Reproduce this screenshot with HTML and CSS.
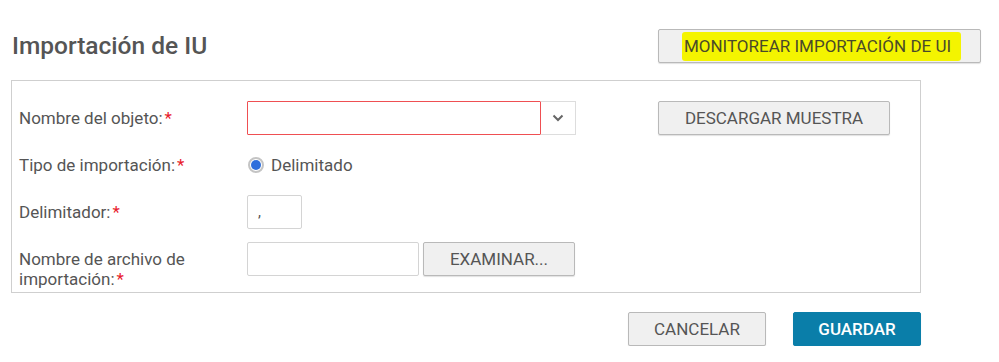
FILE: index.html
```html
<!DOCTYPE html>
<html lang="es">
<head>
    <meta charset="UTF-8">
    <meta name="viewport" content="width=device-width, initial-scale=1.0">
    <title>Importación de IU</title>
    <link rel="stylesheet" href="styles.css">
</head>
<body>
    <div class="page">
        <div class="header">
            <h1>Importación de IU</h1>
            <button class="btn btn-monitor"><mark>MONITOREAR IMPORTACIÓN DE UI</mark></button>
        </div>

        <div class="form-box">
            <div class="form-row">
                <label class="field-label">Nombre del objeto:<span class="req">*</span></label>
                <div class="select-group">
                    <input type="text" class="select-input">
                    <span class="select-arrow">
                        <svg width="12" height="8" viewBox="0 0 12 8">
                            <path d="M1.5 1.5 L6 6 L10.5 1.5" fill="none" stroke="#666" stroke-width="2"/>
                        </svg>
                    </span>
                </div>
                <button class="btn btn-sample">DESCARGAR MUESTRA</button>
            </div>

            <div class="form-row">
                <label class="field-label">Tipo de importación:<span class="req">*</span></label>
                <label class="radio">
                    <span class="radio-dot"></span>
                    Delimitado
                </label>
            </div>

            <div class="form-row">
                <label class="field-label">Delimitador:<span class="req">*</span></label>
                <input type="text" class="text-input delim-input" value=",">
            </div>

            <div class="form-row form-row-top">
                <label class="field-label two-line">Nombre de archivo de importación:<span class="req">*</span></label>
                <input type="text" class="text-input file-input">
                <button class="btn btn-browse">EXAMINAR...</button>
            </div>
        </div>

        <div class="footer">
            <button class="btn btn-cancel">CANCELAR</button>
            <button class="btn btn-save">GUARDAR</button>
        </div>
    </div>
</body>
</html>
```

FILE: styles.css
```css
:root {
    --text: #555555;
    --border: #cfcfcf;
    --btn-bg: #f0f0f0;
    --btn-border: #b9b9b9;
    --primary: #0a7ea9;
    --required: #e8202a;
}

body {
    margin: 0;
    background: #ffffff;
    font-family: Roboto, "Liberation Sans", Arial, sans-serif;
    color: var(--text);
}

.page {
    padding: 29px 0 0 11px;
    width: 970px;
}

.header {
    display: flex;
    justify-content: space-between;
    align-items: center;
    height: 33px;
}

h1 {
    margin: 0 0 0 1px;
    font-size: 24.5px;
    font-weight: 500;
    color: #555;
}

.btn {
    font-family: Roboto, "Liberation Sans", Arial, sans-serif;
    font-size: 17px;
    color: var(--text);
    background: var(--btn-bg);
    border: 1px solid var(--btn-border);
    border-radius: 2px;
    height: 34px;
    padding: 0;
    cursor: pointer;
    box-shadow: 0 1px 1px rgba(0, 0, 0, 0.12);
}

.btn-monitor {
    width: 323px;
    padding-left: 4px;
}

.btn-monitor mark {
    background: #f4f400;
    color: #4a4a2a;
    padding: 4px 10px 5px 2px;
    border-radius: 3px;
}

.form-box {
    margin-top: 18px;
    width: 901px;
    border: 1px solid var(--border);
    padding: 20px 0 3px 7px;
    display: flex;
    flex-direction: column;
    gap: 13px;
}

.form-row {
    display: flex;
    align-items: center;
    min-height: 34px;
}

.form-row-top {
    align-items: flex-start;
}

.field-label {
    width: 228px;
    flex-shrink: 0;
    font-size: 17px;
    line-height: 20px;
    color: var(--text);
}

.two-line {
    width: 200px;
    margin-top: 7px;
    margin-right: 28px;
}

.req {
    color: var(--required);
    margin-left: 2px;
}

.select-group {
    display: flex;
    height: 34px;
}

.select-input {
    width: 294px;
    height: 34px;
    box-sizing: border-box;
    border: 1px solid #ef4f52;
    border-radius: 1px;
    outline: none;
    margin: 0;
}

.select-arrow {
    width: 35px;
    height: 34px;
    box-sizing: border-box;
    border: 1px solid #dddddd;
    border-left: none;
    display: flex;
    align-items: center;
    justify-content: center;
}

.btn-sample {
    width: 232px;
    margin-left: 82px;
}

.radio {
    display: flex;
    align-items: center;
    gap: 7px;
    font-size: 17px;
    margin-left: 1px;
}

.radio-dot {
    width: 16px;
    height: 16px;
    box-sizing: border-box;
    border-radius: 50%;
    border: 2px solid #c4c4c4;
    background: #ffffff;
    display: flex;
    align-items: center;
    justify-content: center;
}

.radio-dot::after {
    content: "";
    width: 10px;
    height: 10px;
    border-radius: 50%;
    background: #2f6fdc;
}

.text-input {
    height: 34px;
    box-sizing: border-box;
    border: 1px solid #d4d4d4;
    border-radius: 2px;
    margin: 0;
    padding: 0 10px;
    font-family: Roboto, "Liberation Sans", Arial, sans-serif;
    font-size: 15px;
    color: var(--text);
    outline: none;
}

.delim-input {
    width: 55px;
}

.file-input {
    width: 172px;
}

.btn-browse {
    width: 152px;
    margin-left: 4px;
}

.footer {
    display: flex;
    justify-content: flex-end;
    gap: 27px;
    width: 910px;
    margin-top: 19px;
}

.btn-cancel {
    width: 138px;
}

.btn-save {
    width: 128px;
    background: var(--primary);
    border-color: var(--primary);
    color: #ffffff;
    font-weight: 500;
}
```
